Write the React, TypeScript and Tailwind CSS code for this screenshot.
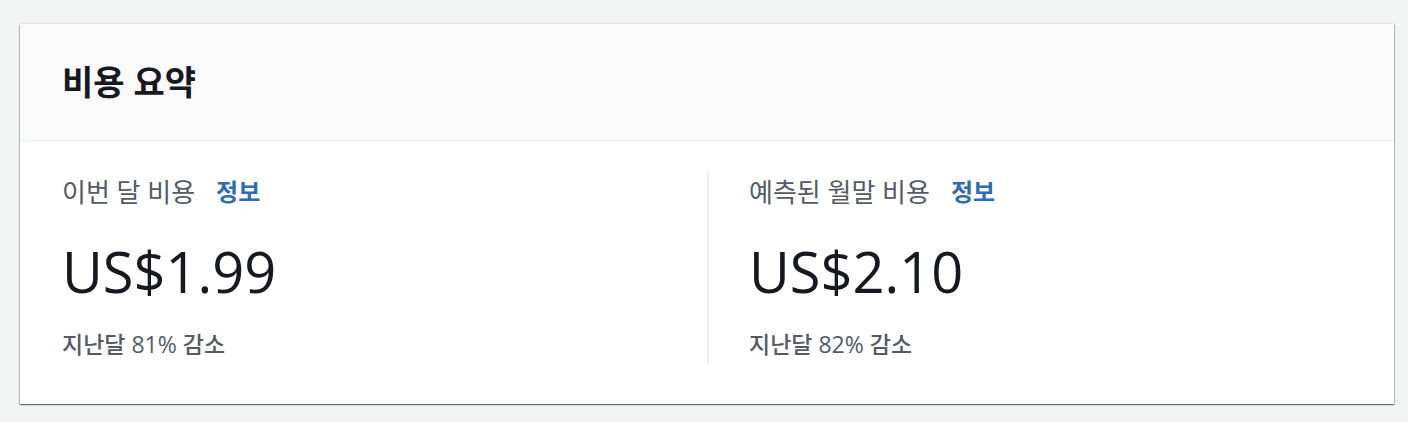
import React from 'react';

const FONT = { fontFamily: '"Open Sans", "Noto Sans CJK KR", sans-serif' };

interface SummaryItemProps {
  label: string;
  amount: string;
  change: string;
  divider?: boolean;
}

const SummaryItem: React.FC<SummaryItemProps> = ({ label, amount, change, divider }) => (
  <div className={`flex flex-col pb-[3px] ${divider ? 'pl-[40px] border-l-2 border-[#ececec]' : 'pl-[42px]'}`}>
    <div className="flex items-center gap-[21px] h-[40px]">
      <span className="text-[26px] text-[#545b64]">{label}</span>
      <span className="text-[24px] font-bold text-[#2d6bb4]">정보</span>
    </div>
    <div className="text-[56px] leading-[64px] text-[#16191f] mt-[27px]">{amount}</div>
    <div className="text-[23px] leading-[32px] font-medium text-[#545b64] mt-[25px]">{change}</div>
  </div>
);

export default function App() {
  return (
    <div className="min-h-[422px] bg-[#f2f3f3] pt-[24px] pl-[20px] pr-[14px]" style={FONT}>
      <div className="bg-white shadow-[0_1px_1px_0_rgba(0,28,36,0.35),1px_1px_1px_0_rgba(0,28,36,0.2),-1px_1px_1px_0_rgba(0,28,36,0.2),0_-1px_1px_0_rgba(0,28,36,0.06)]">
        <div className="h-[117px] bg-[#fafafa] border-b border-[#eaeded] flex items-center px-[42px]">
          <h2 className="text-[34px] font-bold text-[#16191f]">비용 요약</h2>
        </div>
        <div className="grid grid-cols-2 pt-[31px] pb-[41px]">
          <SummaryItem label="이번 달 비용" amount="US$1.99" change="지난달 81% 감소" />
          <SummaryItem label="예측된 월말 비용" amount="US$2.10" change="지난달 82% 감소" divider />
        </div>
      </div>
    </div>
  );
}
